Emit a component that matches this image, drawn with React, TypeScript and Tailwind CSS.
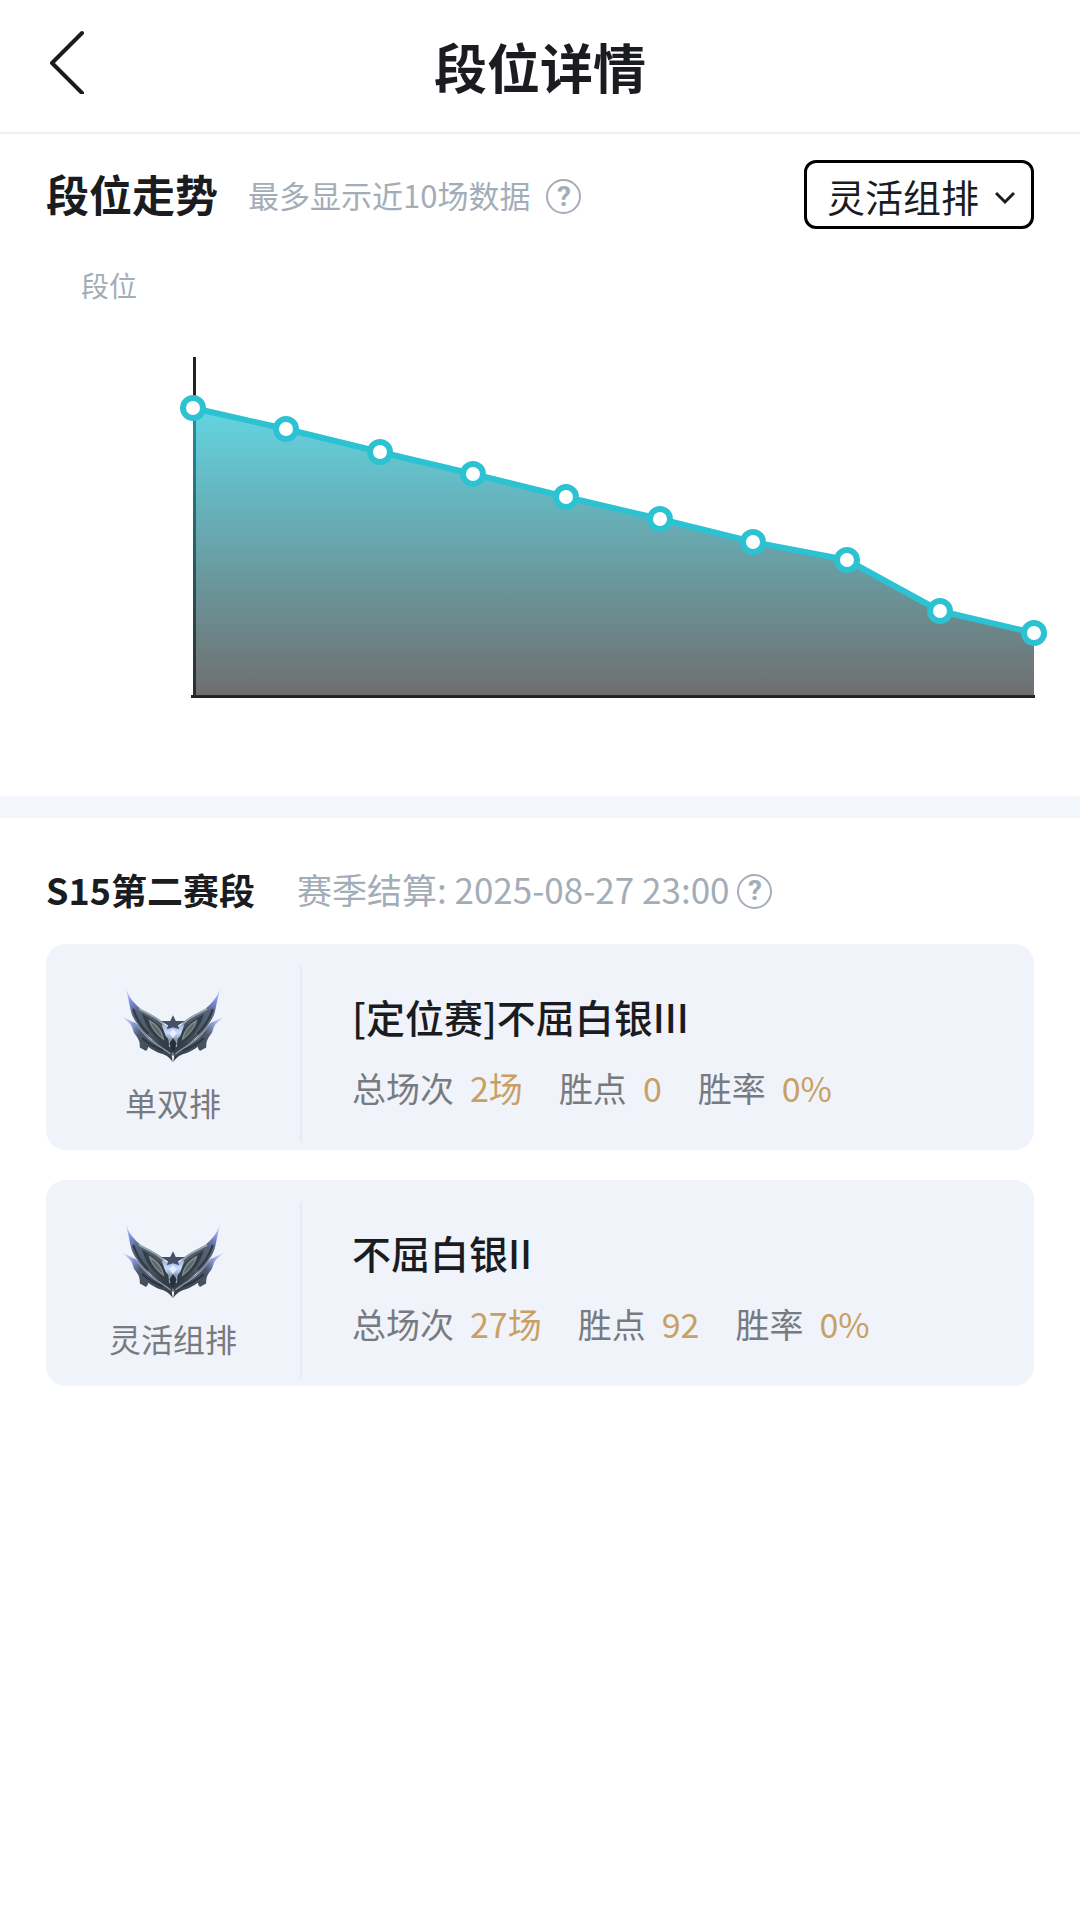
import { useState } from "react";

const points = [
  { x: 193, y: 128 },
  { x: 286, y: 149 },
  { x: 380, y: 172 },
  { x: 473, y: 194 },
  { x: 566, y: 217 },
  { x: 660, y: 239 },
  { x: 753, y: 262 },
  { x: 847, y: 280 },
  { x: 940, y: 331 },
  { x: 1034, y: 353 },
];

const ranks = [
  {
    queue: "单双排",
    tier: "[定位赛]不屈白银III",
    stats: [
      { label: "总场次", value: "2场" },
      { label: "胜点", value: "0" },
      { label: "胜率", value: "0%" },
    ],
  },
  {
    queue: "灵活组排",
    tier: "不屈白银II",
    stats: [
      { label: "总场次", value: "27场" },
      { label: "胜点", value: "92" },
      { label: "胜率", value: "0%" },
    ],
  },
];

function HelpButton({ label }: { label: string }) {
  return (
    <button
      type="button"
      aria-label={label}
      className="mt-1 flex size-[35px] shrink-0 items-center justify-center rounded-full border-2 border-[#a3adb8] font-[Roboto,sans-serif] text-[28px] leading-none font-bold text-[#a3adb8]"
    >
      ?
    </button>
  );
}

function TrendChart() {
  const line = points.map((p) => `${p.x},${p.y}`).join(" ");

  return (
    <svg
      viewBox="0 0 1080 440"
      className="block w-full"
      role="img"
      aria-label="段位走势"
    >
      <defs>
        <linearGradient id="trend-fill" x1="0" y1="0" x2="0" y2="1">
          <stop offset="0" stopColor="#1fc3d6" stopOpacity="0.7" />
          <stop offset="1" stopColor="#323030" stopOpacity="0.7" />
        </linearGradient>
      </defs>

      <path d="M194.500 77V416M191 416.500H1035" stroke="#222" strokeWidth="3" />
      <polygon
        points={`193,416 ${line} 1034,416`}
        fill="url(#trend-fill)"
      />
      <polyline
        points={line}
        fill="none"
        stroke="#2cc2d1"
        strokeWidth="6"
        strokeLinejoin="round"
      />
      {points.map((p) => (
        <circle
          key={p.x}
          cx={p.x}
          cy={p.y}
          r="10"
          fill="#fff"
          stroke="#2cc2d1"
          strokeWidth="6"
        />
      ))}
    </svg>
  );
}

function Wing() {
  return (
    <g>
      {/* lower feather */}
      <path
        d="M46 138C62 148 80 152 96 166L128 203L188 240L192 270C184 256 172 249 158 245C144 240 132 233 121 225C121 232 118 236 113 237C106 229 98 231 97 225C98 212 94 202 84 190C76 180 78 168 68 158Z"
        fill="url(#wing-low)"
      />
      {/* upper feather */}
      <path
        d="M57 56C66 84 82 102 104 120C130 134 158 142 170 166C184 184 192 200 192 252C176 232 150 220 128 200C104 178 76 150 70 116C66 96 62 80 57 56Z"
        fill="url(#wing-top)"
      />
      <path
        d="M104 130C128 146 160 162 172 190C178 206 178 216 176 222C152 206 118 184 104 130Z"
        fill="#333d46"
      />
      <path
        d="M122 146C148 160 164 178 168 208C146 192 128 172 122 146Z"
        fill="#7f8b90"
      />
      <path
        d="M130 156C148 168 158 182 162 198C146 186 134 172 130 156Z"
        fill="#5c696c"
      />
      <path
        d="M78 116C86 140 100 166 122 188"
        fill="none"
        stroke="#2f3948"
        strokeWidth="6"
      />
      <path
        d="M94 116C130 134 158 148 170 168C182 188 184 204 184 226"
        fill="none"
        stroke="#98a6b3"
        strokeWidth="5"
      />
      <path
        d="M80 156C98 170 108 190 128 206C148 222 166 230 186 246"
        fill="none"
        stroke="#8b99b4"
        strokeWidth="4"
      />
      <path
        d="M104 200C118 214 138 226 164 236"
        fill="none"
        stroke="#2c3640"
        strokeWidth="6"
      />
    </g>
  );
}

function RankEmblem() {
  return (
    <svg viewBox="40 50 306 225" className="h-[78px] w-[106px]" aria-hidden="true">
      <defs>
        <linearGradient id="wing-top" x1="0" y1="0" x2="0.6" y2="1">
          <stop offset="0" stopColor="#a9b9ff" stopOpacity="0.4" />
          <stop offset="0.18" stopColor="#7d90e2" />
          <stop offset="0.36" stopColor="#56647c" />
          <stop offset="0.7" stopColor="#4c5862" />
          <stop offset="1" stopColor="#333c47" />
        </linearGradient>
        <linearGradient id="wing-low" x1="0" y1="0" x2="1" y2="0.8">
          <stop offset="0" stopColor="#b4c4ff" stopOpacity="0.4" />
          <stop offset="0.2" stopColor="#8f9fe0" />
          <stop offset="0.4" stopColor="#4c5868" />
          <stop offset="1" stopColor="#38424d" />
        </linearGradient>
        <linearGradient id="gem" x1="0" y1="0" x2="0" y2="1">
          <stop offset="0" stopColor="#9fb4e0" />
          <stop offset="0.4" stopColor="#c9dcff" />
          <stop offset="1" stopColor="#5a6b80" />
        </linearGradient>
      </defs>
      <Wing />
      <g transform="matrix(-1 0 0 1 386 0)">
        <Wing />
      </g>
      <path d="M160 162L193 168L226 162L214 194L193 218L172 194Z" fill="url(#gem)" />
      <path d="M193 174L204 186L193 200L182 186Z" fill="#e4eeff" />
      <path d="M193 200L203 216L193 246L183 216Z" fill="#27303a" />
      <path
        d="M193 134L201 151L228 151L207 164L211 175L193 169L175 175L179 164L158 151L185 151Z"
        fill="#465066"
      />
    </svg>
  );
}

export default function App() {
  const [queue, setQueue] = useState("灵活组排");

  return (
    <main className="min-h-screen bg-white font-['Noto_Sans_CJK_SC',sans-serif] text-[#1a1c1f]">

      <header className="grid grid-cols-[1fr_auto_1fr] items-start border-b-2 border-[#f0f1f3] px-[46px] pt-7 pb-7">

        <button type="button" aria-label="返回" className="justify-self-start">
          <svg viewBox="0 0 40 66" className="h-[66px] w-10" fill="none">
            <path
              d="M36 5L6 35L36 65"
              stroke="#1a1c1f"
              strokeWidth="4"
              strokeLinecap="round"
              strokeLinejoin="round"
            />
          </svg>
        </button>

        <h1 className="text-[53px] leading-[76px] font-bold">段位详情</h1>

      </header>

      {/* Rank trend */}

      <section>

        <div className="flex items-center justify-between px-[46px] pt-[26px]">

          <div className="flex items-center">
            <h2 className="pb-1 text-[43px] leading-[60px] font-bold">段位走势</h2>
            <p className="mr-4 ml-[30px] text-[31px] leading-[60px] text-[#a3adb8]">
              最多显示近10场数据
            </p>
            <HelpButton label="段位走势说明" />
          </div>

          <div className="relative">
            <select
              aria-label="排位类型"
              value={queue}
              onChange={(e) => setQueue(e.target.value)}
              className="h-[69px] w-[230px] appearance-none rounded-xl border-[3px] border-black bg-white pt-[2px] pl-5 text-[38px] leading-[60px]"
            >
              <option>灵活组排</option>
              <option>单双排</option>
            </select>
            <svg
              viewBox="0 0 20 14"
              className="pointer-events-none absolute top-[31px] right-[19px] h-[14px] w-5"
              fill="none"
              aria-hidden="true"
            >
              <path d="M1 2L10 11L19 2" stroke="#1a1c1f" strokeWidth="3" />
            </svg>
          </div>

        </div>

        <p className="pt-9 pl-[81px] text-[28px] leading-10 text-[#a3adb8]">段位</p>

        <div className="-mt-[25px] pb-[76px]">
          <TrendChart />
        </div>

      </section>

      <div className="h-[22px] bg-[#f3f6fd]" />

      {/* Season ranks */}

      <section className="px-[46px] pt-[46px]">

        <div className="flex items-center">
          <h2 className="text-[36px] leading-[50px] font-bold">S15第二赛段</h2>
          <p className="mr-2 ml-[42px] text-[35px] leading-[50px] text-[#a3adb8]">
            赛季结算: 2025-08-27 23:00
          </p>
          <HelpButton label="赛季结算说明" />
        </div>

        <div className="mt-[30px] space-y-[30px]">
          {ranks.map((rank) => (
            <article key={rank.queue} className="flex rounded-[20px] bg-[#f0f3fa] pt-[22px] pb-2">

              <div className="flex h-[176px] w-64 shrink-0 flex-col items-center border-r-2 border-[#e6eaf2] pt-5">
                <RankEmblem />
                <p className="mt-4 text-[32px] leading-[44px] text-[#777b81]">
                  {rank.queue}
                </p>
              </div>

              <div className="pt-5 pl-[50px]">
                <h3 className="text-[39px] leading-[60px] font-medium">{rank.tier}</h3>
                <dl className="mt-4 flex gap-9 text-[34px] leading-[52px]">
                  {rank.stats.map((stat) => (
                    <div key={stat.label} className="flex gap-4">
                      <dt className="text-[#777b81]">{stat.label}</dt>
                      <dd className="text-[#c9a063]">{stat.value}</dd>
                    </div>
                  ))}
                </dl>
              </div>

            </article>
          ))}
        </div>

      </section>

    </main>
  );
}
